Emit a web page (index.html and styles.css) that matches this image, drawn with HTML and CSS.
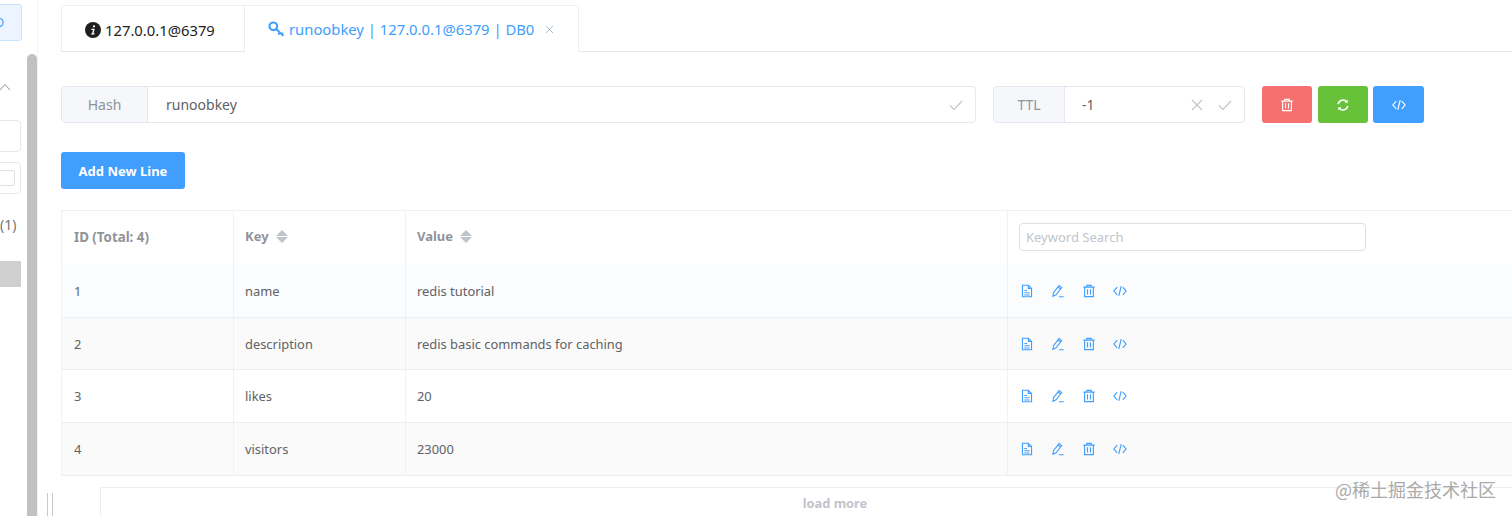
FILE: index.html
```html
<!DOCTYPE html>
<html lang="en">
<head>
<meta charset="utf-8">
<title>RedisDesktop</title>
<link rel="stylesheet" href="styles.css">
</head>
<body>
<svg class="defs" width="0" height="0">
  <symbol id="i-doc" viewBox="0 0 16 16"><path d="M2.8 1.5h6.7L13.2 5v9.5H2.8zM9.5 1.5V5h3.7M5 7.5h3M5 10h6M5 12.5h6" fill="none" stroke="currentColor" stroke-width="1.25"/></symbol>
  <symbol id="i-edit" viewBox="0 0 16 16"><path d="M2.2 14l.6-4 6.4-8.2 3 2.3-6.4 8.2zM8 3.4l3 2.3M9 14.5h5.5" fill="none" stroke="currentColor" stroke-width="1.25"/></symbol>
  <symbol id="i-trash" viewBox="0 0 16 16"><path d="M1.5 3.5h13M5.5 3.5V1.5h5v2M3 3.5v11h10v-11M6.3 6v6M9.7 6v6" fill="none" stroke="currentColor" stroke-width="1.3"/></symbol>
  <symbol id="i-code" viewBox="0 0 16 16"><path d="M4.8 3.6L1 8l3.8 4.4M11.2 3.6L15 8l-3.8 4.4M9.4 2.4L6.6 13.6" fill="none" stroke="currentColor" stroke-width="1.3"/></symbol>
  <symbol id="i-refresh" viewBox="0 0 16 16"><path d="M2.5 7a5.6 5.6 0 0 1 9.8-2.6M13.5 9a5.6 5.6 0 0 1-9.8 2.6" fill="none" stroke="currentColor" stroke-width="1.7"/><path d="M13.4 1.8v3.6H9.8zM2.6 14.2v-3.6h3.6z" fill="currentColor"/></symbol>
  <symbol id="i-check" viewBox="0 0 16 16"><path d="M2 8.5l4 4 8-8.5" fill="none" stroke="currentColor" stroke-width="1.1"/></symbol>
  <symbol id="i-close" viewBox="0 0 16 16"><path d="M3 3l10 10M13 3L3 13" fill="none" stroke="currentColor" stroke-width="1.1"/></symbol>
  <symbol id="i-key" viewBox="0 0 16 16"><circle cx="5" cy="5" r="3.6" fill="none" stroke="currentColor" stroke-width="2"/><path d="M7.6 7.6l7 6.4M11.2 10.9l-1.7 1.8M14 11.2l-1.5 1.6" fill="none" stroke="currentColor" stroke-width="1.9"/></symbol>
</svg>
<div class="app">
  <aside class="side">
    <div class="side-col">
      <div class="side-btn"><span>O</span></div>
      <svg class="chev" viewBox="0 0 12 8"><path d="M1 7l5-5.5L11 7" fill="none" stroke="currentColor" stroke-width="1"/></svg>
      <div class="side-box"></div>
      <div class="side-box side-box-check"><span class="side-inner"></span></div>
      <div class="side-count">(1)</div>
      <div class="side-sel"></div>
    </div>
    <div class="thumb"></div>
  </aside>
  <div class="splitter"><span class="grip"></span></div>
  <main class="main">
    <nav class="tabs">
      <div class="tab tab-info">
        <svg class="ico-info" viewBox="0 0 16 16"><circle cx="8" cy="8" r="8" fill="#1f1f1f"/><path d="M9 3.2a1.1 1.1 0 1 1 0 2.2 1.1 1.1 0 0 1 0-2.2zM6.5 6.8h3.2L8.6 11.2h1l-.2 1.2H6.1l.2-1.2h.9l.8-3.2H6.3z" fill="#fff"/></svg>
        <span>127.0.0.1@6379</span>
      </div>
      <div class="tab tab-key">
        <svg class="ico-key"><use href="#i-key"/></svg>
        <span>runoobkey | 127.0.0.1@6379 | DB0</span>
        <svg class="ico-x"><use href="#i-close"/></svg>
      </div>
    </nav>
    <section class="bar">
      <div class="group group-key">
        <div class="prepend prepend-hash">Hash</div>
        <div class="field"><span class="field-text">runoobkey</span><svg class="ico-s"><use href="#i-check"/></svg></div>
      </div>
      <div class="group group-ttl">
        <div class="prepend prepend-ttl">TTL</div>
        <div class="field"><span class="field-text">-1</span><svg class="ico-s ico-x2"><use href="#i-close"/></svg><svg class="ico-s"><use href="#i-check"/></svg></div>
      </div>
      <div class="actions">
        <button class="btn btn-red"><svg><use href="#i-trash"/></svg></button>
        <button class="btn btn-green"><svg><use href="#i-refresh"/></svg></button>
        <button class="btn btn-blue"><svg><use href="#i-code"/></svg></button>
      </div>
    </section>
    <button class="add">Add New Line</button>
    <section class="table">
      <div class="row row-head">
        <div class="cell cell-id">ID (Total: 4)</div>
        <div class="cell">Key<span class="sort"><i class="up"></i><i class="down"></i></span></div>
        <div class="cell">Value<span class="sort"><i class="up"></i><i class="down"></i></span></div>
        <div class="cell"><div class="search">Keyword Search</div></div>
      </div>
      <div class="row row-hover">
        <div class="cell">1</div><div class="cell">name</div><div class="cell">redis tutorial</div>
        <div class="cell ops"><svg><use href="#i-doc"/></svg><svg><use href="#i-edit"/></svg><svg><use href="#i-trash"/></svg><svg><use href="#i-code"/></svg></div>
      </div>
      <div class="row row-alt">
        <div class="cell">2</div><div class="cell">description</div><div class="cell">redis basic commands for caching</div>
        <div class="cell ops"><svg><use href="#i-doc"/></svg><svg><use href="#i-edit"/></svg><svg><use href="#i-trash"/></svg><svg><use href="#i-code"/></svg></div>
      </div>
      <div class="row">
        <div class="cell">3</div><div class="cell">likes</div><div class="cell">20</div>
        <div class="cell ops"><svg><use href="#i-doc"/></svg><svg><use href="#i-edit"/></svg><svg><use href="#i-trash"/></svg><svg><use href="#i-code"/></svg></div>
      </div>
      <div class="row row-alt">
        <div class="cell">4</div><div class="cell">visitors</div><div class="cell">23000</div>
        <div class="cell ops"><svg><use href="#i-doc"/></svg><svg><use href="#i-edit"/></svg><svg><use href="#i-trash"/></svg><svg><use href="#i-code"/></svg></div>
      </div>
    </section>
    <div class="more">load more</div>
  </main>
  <div class="watermark">@稀土掘金技术社区</div>
</div>
</body>
</html>
```
FILE: styles.css
```css
* { box-sizing: border-box; }
html, body { margin: 0; height: 100%; background: #fff; overflow: hidden; }
body { font-family: "Noto Sans", "Noto Sans CJK SC", sans-serif; color: #606266; font-size: 14px; }
.defs { position: absolute; }
.app { position: relative; display: flex; width: 1512px; height: 516px; overflow: hidden; }

.side { width: 38px; flex: none; display: flex; border-right: 1px solid #f2f3f5; }
.side-col { width: 27px; flex: none; display: flex; flex-direction: column; align-items: flex-end; padding: 4px 6px 0 0; overflow: hidden; }
.side-btn { width: 36px; height: 37px; flex: none; margin-right: -1px; background: #ecf5ff; border: 1px solid #c6e2ff; border-radius: 3px; display: flex; align-items: center; justify-content: flex-end; color: #409eff; font-size: 12px; padding-right: 17px; }
.chev { width: 12px; height: 8px; flex: none; align-self: flex-start; margin: 42px 0 0 -1px; color: #909399; }
.side-box { width: 30px; height: 32px; flex: none; margin-top: 29px; border: 1px solid #e4e7ed; border-radius: 4px; }
.side-box-check { margin-top: 10px; display: flex; align-items: center; }
.side-inner { width: 16px; height: 16px; margin-left: 7px; flex: none; border: 1px solid #dcdfe6; border-radius: 2px; }
.side-count { align-self: flex-start; margin-top: 21px; color: #777; font-size: 14px; line-height: 19px; }
.side-sel { width: 30px; height: 26px; flex: none; margin-top: 27px; background: #cfcfcf; }
.thumb { width: 10px; margin-top: 54px; background: #c1c1c1; border-radius: 5px 5px 0 0; }

.splitter { width: 23px; flex: none; display: flex; align-items: flex-end; padding-left: 9px; }
.grip { width: 6px; height: 23px; border-left: 1px solid #c9c9c9; border-right: 1px solid #c9c9c9; }

.main { flex: 1; min-width: 0; padding-top: 5px; }
.tabs { display: flex; height: 47px; border-bottom: 1px solid #e4e7ed; }
.tab { height: 47px; display: flex; align-items: center; padding-top: 2px; border: 1px solid #eceef2; background: #fff; font-size: 14.8px; }
.tab-info { width: 184px; color: #222; padding-left: 23px; border-bottom-color: #e4e7ed; border-radius: 3px 0 0 0; }
.tab-key { width: 334px; color: #409eff; padding: 1px 0 0 23px; border-left: 0; border-bottom-color: #fff; border-radius: 0 3px 0 0; }
.ico-info { width: 16px; height: 16px; margin-right: 4px; flex: none; }
.ico-key { width: 17px; height: 17px; margin-right: 4px; flex: none; }
.ico-x { width: 11px; height: 11px; margin-left: 10px; flex: none; color: #8aa6c4; }

.bar { display: flex; margin-top: 34px; height: 37px; }
.group { display: flex; border: 1px solid #e4e7ed; border-radius: 4px; overflow: hidden; }
.group-key { width: 915px; }
.group-ttl { width: 252px; margin-left: 17px; }
.prepend { flex: none; background: #f5f7fa; color: #909399; border-right: 1px solid #e4e7ed; display: flex; align-items: center; justify-content: center; font-size: 14px; }
.prepend-hash { width: 86px; }
.prepend-ttl { width: 71px; }
.field { flex: 1; display: flex; align-items: center; padding: 0 11px 0 18px; }
.group-ttl .field { padding-left: 17px; }
.field-text { flex: 1; color: #606266; font-size: 14px; }
.ico-s { width: 16px; height: 16px; color: #c0c4cc; flex: none; }
.ico-x2 { margin-right: 12px; }
.actions { display: flex; gap: 5.5px; margin-left: 17px; }
.btn { width: 50px; height: 37px; border: 0; border-radius: 3px; padding: 0; display: flex; align-items: center; justify-content: center; color: #fff; }
.btn svg { width: 14px; height: 14px; }
.btn-red { background: #f56c6c; opacity: .97; }
.btn-green { background: #67c23a; }
.btn-blue { background: #409eff; width: 51px; }

.add { display: block; margin-top: 29px; width: 124px; height: 37px; background: #409eff; color: #fff; border: 0; border-radius: 3px; font: 700 13px "Noto Sans", sans-serif; padding: 0; }

.table { margin-top: 21px; width: 1520px; border-top: 1px solid #f0f1f4; border-left: 1px solid #f0f1f4; color: #606266; font-size: 12.9px; }
.row { display: grid; grid-template-columns: 172px 172px 602px 1fr; height: 52.7px; border-bottom: 1px solid #ebeef5; }
.row-head { height: 54px; color: #909399; font-weight: 700; border-bottom: 0; font-size: 13px; }
.row-hover { background: #fafcfe; }
.row-alt { background: #fafafa; }
.cell { display: flex; align-items: center; padding-left: 11px; border-right: 1px solid #f0f1f4; }
.cell:first-child { padding-left: 12px; }
.row-head .cell { padding-bottom: 4px; }
.row-head .cell-id { padding-bottom: 2px; font-size: 13.3px; }
.sort { display: inline-flex; flex-direction: column; gap: 1px; margin-left: 7px; }
.sort i { display: block; width: 0; height: 0; border-left: 6px solid transparent; border-right: 6px solid transparent; }
.sort .up { border-bottom: 6px solid #c0c4cc; }
.sort .down { border-top: 6px solid #c0c4cc; }
.search { width: 347px; height: 28px; border: 1px solid #dcdfe6; border-radius: 4px; color: #c0c4cc; font-weight: 400; font-size: 13px; line-height: 26px; padding-left: 6px; margin-top: 2px; }
.ops { color: #409eff; gap: 17px; padding-left: 12px; }
.ops svg { width: 14px; height: 14px; flex: none; }

.more { margin: 11px 0 0 39px; width: 1470px; height: 40px; border: 1px solid #ebeef5; color: #c0c4cc; font-weight: 700; font-size: 12.8px; text-align: center; line-height: 31px; }

.watermark { position: absolute; left: 1335px; top: 478px; font-family: "Noto Sans CJK SC", sans-serif; font-size: 18px; line-height: 22px; color: #aaa; white-space: nowrap; }
```
